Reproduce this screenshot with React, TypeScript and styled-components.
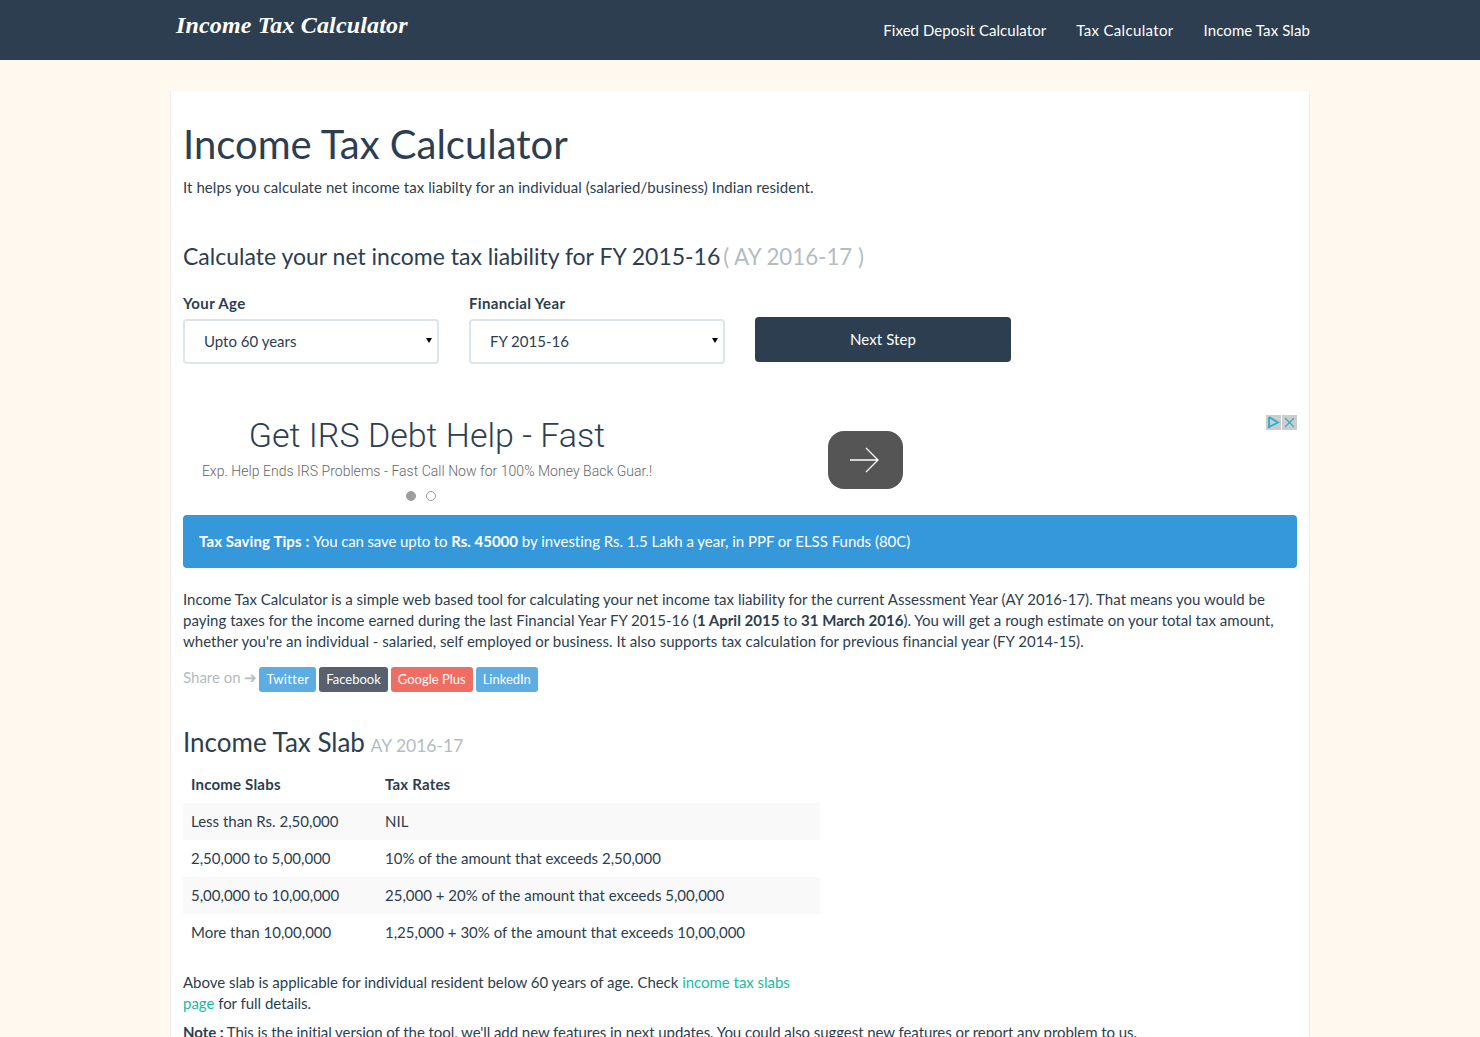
import React from 'react'
import styled, { createGlobalStyle } from 'styled-components'

const GlobalStyle = createGlobalStyle`
  html, body {
    margin: 0;
    height: 1037px;
    overflow: hidden;
  }
  body {
    background: #fff9f0;
    color: #2c3e50;
    font-family: Lato, "Liberation Sans", sans-serif;
    font-size: 15px;
    line-height: 21px;
  }
  * { box-sizing: border-box; }
`

const Navbar = styled.nav`
  height: 60px;
  background: #2c3e50;
`

const NavInner = styled.div`
  width: 1140px;
  margin: 0 auto;
  display: flex;
  justify-content: space-between;
`

const Brand = styled.a`
  padding: 9px 0 0 6px;
  color: #fff;
  font-family: "Liberation Serif", serif;
  font-style: italic;
  font-size: 24px;
  line-height: 32px;
  font-weight: bold;
  letter-spacing: 0.15px;
`

const NavLinks = styled.ul`
  display: flex;
  gap: 30px;
  margin: 0;
  padding: 20px 0 0;
  list-style: none;
`

const NavLink = styled.a`
  color: #fff;
  letter-spacing: ${props => props.$spacing || '0.1px'};
`

const Container = styled.main`
  width: 1140px;
  margin: 31px auto 0;
  padding: 29px 12px 0;
  background: #fff;
  border: solid #eee;
  border-width: 0 1px;
  box-shadow: 0 0 1px rgba(0, 0, 0, 0.06);
`

const PageTitle = styled.h1`
  margin: -1px 0 8px;
  font-size: 40px;
  line-height: 50px;
  font-weight: 400;
`

const Paragraph = styled.p`
  margin: 0;
  letter-spacing: 0.07px;
`

const SubTitle = styled.h3`
  margin: 43px 0 0;
  font-size: 23px;
  line-height: 30px;
  font-weight: 400;
`

const Muted = styled.small`
  margin-left: ${props => props.$shift || '-3px'};
  font-size: ${props => props.$size || '22.3px'};
  color: #b4bcc2;
`

const FormRow = styled.form`
  display: flex;
  gap: 30px;
  margin-top: 21px;
`

const Field = styled.div`
  width: 256px;
  display: flex;
  flex-direction: column;
  gap: 5px;
`

const Label = styled.label`
  font-weight: 700;
  letter-spacing: 0.35px;
`

const SelectBox = styled.div`
  position: relative;

  &::after {
    content: '';
    position: absolute;
    top: 19px;
    right: 7px;
    border-style: solid;
    border-width: 5px 3px 0;
    border-color: #000 transparent transparent;
    pointer-events: none;
  }
`

const Select = styled.select`
  display: block;
  width: 100%;
  height: 45px;
  padding: 0 19px 2px;
  appearance: none;
  background: #fff;
  color: #2c3e50;
  border: 2px solid #dce4ec;
  border-radius: 4px;
  font-family: inherit;
  font-size: 15px;
`

const NextButton = styled.button`
  width: 256px;
  height: 45px;
  margin-top: 24px;
  padding: 0 0 2px;
  background: #2c3e50;
  color: #fff;
  border: none;
  border-radius: 4px;
  font-family: inherit;
  font-size: 15px;
  letter-spacing: 0.1px;
`

const Ad = styled.div`
  position: relative;
  height: 100px;
  margin-top: 51px;
  display: flex;
`

const AdText = styled.div`
  width: 488px;
  text-align: center;
  font-family: Roboto, sans-serif;
  font-weight: 300;
`

const AdTitle = styled.div`
  font-size: 34px;
  line-height: 40px;
`

const AdBody = styled.div`
  margin-top: 6px;
  font-size: 14px;
  line-height: 20px;
  letter-spacing: 0.03px;
  color: #666;
`

const Dots = styled.div`
  display: flex;
  justify-content: center;
  gap: 10px;
  margin-top: 10px;
  padding-right: 12px;
`

const Dot = styled.span`
  width: 10px;
  height: 10px;
  border-radius: 50%;
  border: 1px solid #9e9e9e;
  background: ${props => (props.$active ? '#9e9e9e' : '#fff')};
`

const AdArrow = styled.div`
  width: 75px;
  height: 58px;
  margin: 16px 0 0 157px;
  padding-right: 4px;
  border-radius: 16px;
  background: #555;
  display: flex;
  align-items: center;
  justify-content: center;
`

const AdBadges = styled.div`
  position: absolute;
  top: 0;
  right: 0;
  display: flex;
  gap: 1px;
`

const AdBadge = styled.span`
  width: 15px;
  height: 15px;
  background: #cdcdcd;
  display: flex;
  align-items: center;
  justify-content: center;
`

const TipAlert = styled.div`
  height: 53px;
  padding: 16px;
  background: #3498db;
  color: #fff;
  border-radius: 4px;
`

const TipLead = styled.b`
  letter-spacing: 0.1px;
`

const TipPhrase = styled.span`
  letter-spacing: -0.12px;
`

const TipRest = styled.span`
  letter-spacing: -0.02px;
`

const Intro = styled.p`
  margin: 21px 0 0;
  letter-spacing: 0.02px;
`

const ShareRow = styled.div`
  display: flex;
  align-items: center;
  margin-top: 15px;
  height: 25px;
  gap: 3px;
  color: #b4bcc2;
`

const ShareLabel = styled.span`
  margin-right: -1px;
  margin-top: -5px;
`

const ShareLink = styled.a`
  height: 25px;
  padding: 0 7px;
  border-radius: 3px;
  background: ${props => props.$bg};
  color: #fff;
  font-size: 13px;
  line-height: 25px;
  letter-spacing: ${props => props.$spacing || '0px'};
`

const SlabTitle = styled.h3`
  margin: 33px 0 0;
  font-size: 26px;
  line-height: 34px;
  font-weight: 400;
`

const SlabTable = styled.table`
  width: 637px;
  margin-top: 3px;
  border-collapse: collapse;
`

const HeadCell = styled.th`
  width: ${props => props.$width || 'auto'};
  padding: 8px;
  text-align: left;
  font-weight: 700;
  letter-spacing: 0.2px;
`

const Cell = styled.td`
  padding: 8px;
`

const Row = styled.tr`
  background: ${props => (props.$striped ? '#f9f9f9' : 'transparent')};
`

const SlabNote = styled.p`
  width: 637px;
  margin: 21px 0 0;
  letter-spacing: -0.03px;
`

const TextLink = styled.a`
  color: #18bc9c;
`

const FootNote = styled.p`
  margin: 8px 0 0;
  letter-spacing: -0.06px;
`

const slabs = [
  ['Less than Rs. 2,50,000', 'NIL'],
  ['2,50,000 to 5,00,000', '10% of the amount that exceeds 2,50,000'],
  ['5,00,000 to 10,00,000', '25,000 + 20% of the amount that exceeds 5,00,000'],
  ['More than 10,00,000', '1,25,000 + 30% of the amount that exceeds 10,00,000'],
]

export default function App() {
  return (
    <>
      <GlobalStyle />
      <Navbar>
        <NavInner>
          <Brand>Income Tax Calculator</Brand>
          <NavLinks>
            <li><NavLink $spacing="0.06px">Fixed Deposit Calculator</NavLink></li>
            <li><NavLink $spacing="0.33px">Tax Calculator</NavLink></li>
            <li><NavLink>Income Tax Slab</NavLink></li>
          </NavLinks>
        </NavInner>
      </Navbar>
      <Container>
        <PageTitle>Income Tax Calculator</PageTitle>
        <Paragraph>It helps you calculate net income tax liabilty for an individual (salaried/business) Indian resident.</Paragraph>
        <SubTitle>Calculate your net income tax liability for FY 2015-16 <Muted>( AY 2016-17 )</Muted></SubTitle>
        <FormRow>
          <Field>
            <Label>Your Age</Label>
            <SelectBox>
              <Select defaultValue="60"><option value="60">Upto 60 years</option></Select>
            </SelectBox>
          </Field>
          <Field>
            <Label>Financial Year</Label>
            <SelectBox>
              <Select defaultValue="2015"><option value="2015">FY 2015-16</option></Select>
            </SelectBox>
          </Field>
          <NextButton type="button">Next Step</NextButton>
        </FormRow>
        <Ad>
          <AdText>
            <AdTitle>Get IRS Debt Help - Fast</AdTitle>
            <AdBody>Exp. Help Ends IRS Problems - Fast Call Now for 100% Money Back Guar.!</AdBody>
            <Dots><Dot $active /><Dot /></Dots>
          </AdText>
          <AdArrow>
            <svg width="30" height="26" viewBox="0 0 30 26" fill="none" stroke="#fff" strokeWidth="1.3">
              <path d="M1 13h28M17 1l12 12-12 12" />
            </svg>
          </AdArrow>
          <AdBadges>
            <AdBadge>
              <svg width="13" height="13" viewBox="0 0 13 13" fill="none" stroke="#2ab0d0" strokeWidth="1.8">
                <path d="M2 1v10M2 1l9 5.5L2 11" />
                <circle cx="2" cy="11" r="1.2" fill="#2ab0d0" stroke="none" />
              </svg>
            </AdBadge>
            <AdBadge>
              <svg width="11" height="11" viewBox="0 0 11 11" fill="none" stroke="#2ab0d0" strokeWidth="1.2">
                <path d="M1 1l9 9M10 1l-9 9" />
              </svg>
            </AdBadge>
          </AdBadges>
        </Ad>
        <TipAlert>
          <TipLead>Tax Saving Tips :</TipLead> <TipPhrase>You can save upto to</TipPhrase> <b>Rs. 45000</b> <TipRest>by investing Rs. 1.5 Lakh a year, in PPF or ELSS Funds (80C)</TipRest>
        </TipAlert>
        <Intro>
          Income Tax Calculator is a simple web based tool for calculating your net income tax liability for the current Assessment Year (AY 2016-17). That means you would be paying taxes for the income earned during the last Financial Year FY 2015-16 (<b>1 April 2015</b> to <b>31 March 2016</b>). You will get a rough estimate on your total tax amount, whether you're an individual - salaried, self employed or business. It also supports tax calculation for previous financial year (FY 2014-15).
        </Intro>
        <ShareRow>
          <ShareLabel>Share on ➔</ShareLabel>
          <ShareLink $bg="#5dade2" $spacing="0.3px">Twitter</ShareLink>
          <ShareLink $bg="#56606e">Facebook</ShareLink>
          <ShareLink $bg="#ee6e63">Google Plus</ShareLink>
          <ShareLink $bg="#5dade2">LinkedIn</ShareLink>
        </ShareRow>
        <SlabTitle>Income Tax Slab <Muted $size="17.5px" $shift="-1px">AY 2016-17</Muted></SlabTitle>
        <SlabTable>
          <thead>
            <tr><HeadCell $width="194px">Income Slabs</HeadCell><HeadCell>Tax Rates</HeadCell></tr>
          </thead>
          <tbody>
            {slabs.map((slab, i) => (
              <Row key={slab[0]} $striped={i % 2 === 0}>
                <Cell>{slab[0]}</Cell>
                <Cell>{slab[1]}</Cell>
              </Row>
            ))}
          </tbody>
        </SlabTable>
        <SlabNote>
          Above slab is applicable for individual resident below 60 years of age. Check <TextLink>income tax slabs page</TextLink> for full details.
        </SlabNote>
        <FootNote>
          <b>Note :</b> This is the initial version of the tool, we'll add new features in next updates. You could also suggest new features or report any problem to us.
        </FootNote>
      </Container>
    </>
  )
}
